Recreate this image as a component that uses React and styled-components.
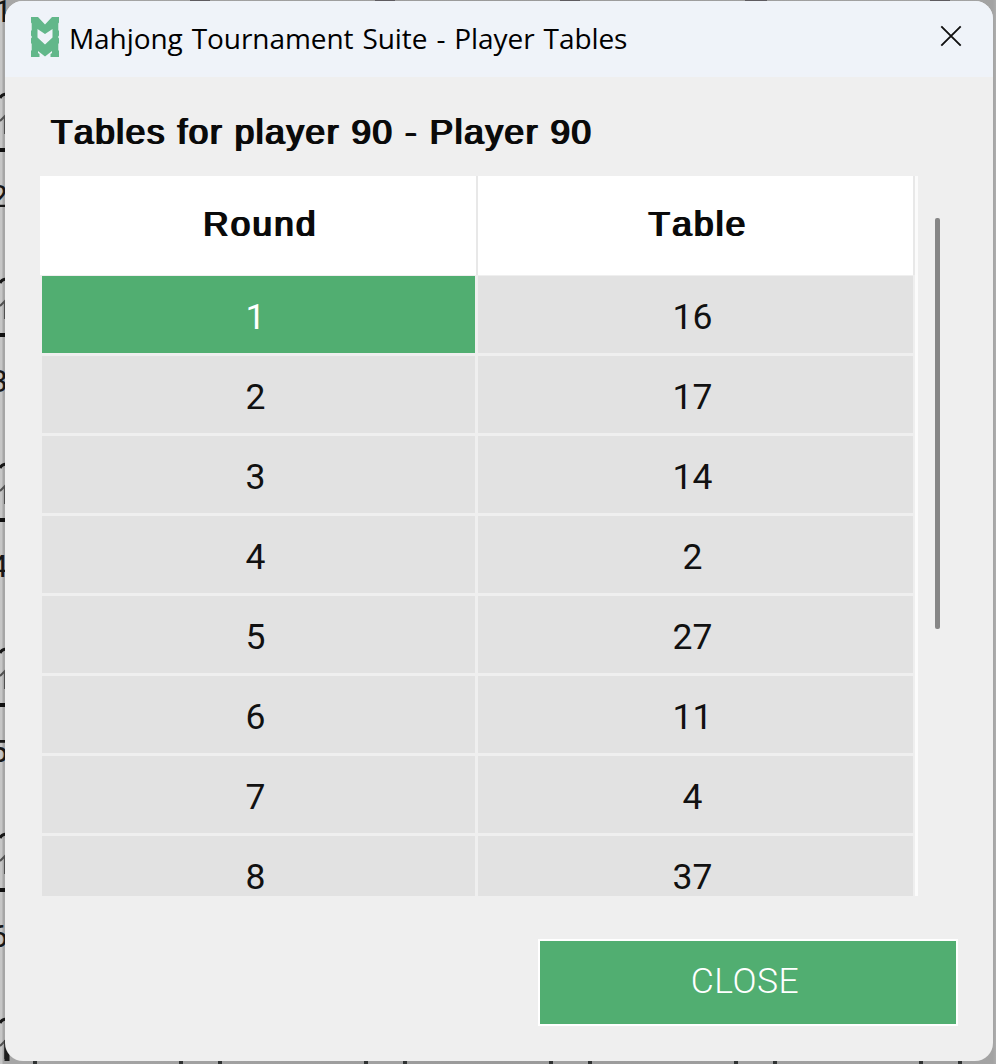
import React from "react";
import styled, { createGlobalStyle, css } from "styled-components";

const Global = createGlobalStyle`
  * { box-sizing: border-box; }
  html, body, #root { height: 100%; margin: 0; }
  body { overflow: hidden; background: #c4c4c4; font-family: "Liberation Sans", Arial, sans-serif; }
`;

const Desktop = styled.div`
  position: relative;
  width: 996px;
  height: 1064px;
  padding: 1px 3px 3px 5px;
  overflow: hidden;
  background: linear-gradient(90deg, #c6c6c6 0 2px, #a6a6a6 3px 5px, #a6a6a6 20px, #9a9a9a 50%, #a3a3a3 993px, #adadad 996px);
`;

const Backdrop = styled.svg`
  position: absolute;
  inset: 0;
`;

const Window = styled.main`
  position: relative;
  display: flex;
  flex-direction: column;
  width: 988px;
  height: 1060px;
  border-radius: 18px;
  overflow: hidden;
  background: #efefef;
`;

const TitleBar = styled.header`
  display: flex;
  align-items: center;
  flex: none;
  height: 76px;
  padding: 0 31px 0 25px;
  background: #eff3f9;
`;

const Logo = styled.svg`
  flex: none;
  width: 30px;
  height: 40px;
  margin-bottom: 4px;
`;

const Title = styled.h1`
  flex: 1;
  margin: 0 0 2px 9px;
  color: #000;
  font: 400 28px/40px "Open Sans", "Noto Sans", sans-serif;
  letter-spacing: -0.07px;
  word-spacing: 1.8px;
  white-space: nowrap;
`;

const CloseIcon = styled.svg`
  flex: none;
  width: 22px;
  height: 22px;
  margin-bottom: 6px;
`;

const Content = styled.section`
  display: flex;
  flex-direction: column;
  padding: 34px 36px 0 35px;
`;

const emboldened = css`
  font-weight: 400;
  font-kerning: none;
  text-shadow: 1px 0 currentColor, 2px 0 currentColor;
`;

const Heading = styled.h2`
  margin: 0 0 0 10px;
  height: 65px;
  font-size: 35px;
  line-height: 42px;
  letter-spacing: 1.67px;
  color: #0a0a0a;
  white-space: nowrap;
  ${emboldened}
`;

const TableArea = styled.div`
  display: flex;
  height: 720px;
`;

const Grid = styled.div`
  flex: none;
  width: 878px;
  height: 720px;
  overflow: hidden;
  border-right: 3px solid #fbfbfb;
`;

const HeaderRow = styled.div`
  display: grid;
  grid-template-columns: 436px 435px;
  gap: 2px;
  width: 875px;
  height: 99px;
  background: #e8e8e8;
`;

const HeaderCell = styled.div`
  display: flex;
  align-items: center;
  justify-content: center;
  padding: 0 0 3px 3px;
  background: #fff;
  color: #0a0a0a;
  font-size: 35px;
  letter-spacing: 2.3px;
  ${emboldened}
`;

const Row = styled.div`
  display: grid;
  grid-template-columns: 433px 435px;
  gap: 3px;
  height: 77px;
  margin: ${(p) => (p.$first ? "1px" : "3px")} 0 0 2px;
`;

const Cell = styled.div`
  display: flex;
  align-items: center;
  justify-content: center;
  padding: 5px 6px 0 0;
  font-family: Roboto, "Liberation Sans", sans-serif;
  font-size: 35.5px;
  color: ${(p) => (p.$selected ? "#fff" : "#111")};
  background: ${(p) => (p.$selected ? "#51ae71" : "#e2e2e2")};
`;

const ScrollThumb = styled.div`
  width: 5px;
  height: 411px;
  margin: 42px 0 0 17px;
  border-radius: 2px;
  background: #868686;
`;

const CloseButton = styled.button`
  align-self: flex-end;
  width: 420px;
  height: 87px;
  margin: 43px -1px 0 0;
  padding: 0 6px 3px 0;
  border: 2px solid #fff;
  background: #51ae71;
  color: #fff;
  font: 300 35.5px Roboto, "Liberation Sans", sans-serif;
  letter-spacing: 0.5px;
`;

const rows = [[1, 16], [2, 17], [3, 14], [4, 2], [5, 27], [6, 11], [7, 4], [8, 37]];

function SheetBehind() {
  return (
    <Backdrop width="996" height="1064" viewBox="0 0 996 1064">
      {[0, 1, 2, 3, 4, 5].map((i) => (
        <g key={i} transform={`translate(0 ${i * 185})`}>
          <text x={i === 0 ? -6 : -10} y="22" fontSize="32" fontFamily="Roboto" fill="#161616">{i + 1}</text>
          <path d="M0 98 Q2 94 7 94" stroke="#161616" strokeWidth="3" fill="none" />
          <path d="M0 121 L5 116 V134" stroke="#505050" strokeWidth="2" fill="none" />
          {i < 5 && <rect y="148" width="6" height="4" fill="#101010" />}
        </g>
      ))}
      <path d="M7 1040 V1061" stroke="#1d1d1d" strokeWidth="5" />
      <path d="M181 1061h39M366 1061h39M551 1061h39M736 1061h39M921 1061h39" stroke="#a1a1a1" strokeWidth="6" />
      <path d="M35 1058v6M181 1058v6M220 1058v6M366 1058v6M405 1058v6M551 1058v6M590 1058v6M736 1058v6M775 1058v6M921 1058v6M960 1058v6" stroke="#303333" strokeWidth="4" />
      <path d="M190 0h20M375 0h20M560 0h20M745 0h22M930 0h20" stroke="#5e5b60" strokeWidth="2" />
    </Backdrop>
  );
}

function TileLogo() {
  return (
    <Logo viewBox="0 0 30 40">
      <path
        fill="#62b78a"
        fillRule="evenodd"
        d="M1 0H8L15 7.5L22 0H29V5.5L28.3 6.5V13L29 14V18.5L28 20L29 21.5V26L28.3 27V33L29 34V40H20.5V37L22 36V34L15 39.5L8 34V36L9.5 37V40H1V34L1.7 33V27L1 26V21.5L2 20L1 18.5V14L1.7 13V6.5L1 5.5Z
           M7.5 12V20.5L15 27.5L22.5 20.5V12L15 17Z"
      />
    </Logo>
  );
}

export default function App() {
  return (
    <Desktop>
      <Global />
      <SheetBehind />
      <Window>
        <TitleBar>
          <TileLogo />
          <Title>Mahjong Tournament Suite - Player Tables</Title>
          <CloseIcon viewBox="0 0 22 22">
            <path d="M1.3 1.3L20.7 20.7M20.7 1.3L1.3 20.7" stroke="#111" strokeWidth="1.9" />
          </CloseIcon>
        </TitleBar>
        <Content>
          <Heading>Tables for player 90 - Player 90</Heading>
          <TableArea>
            <Grid>
              <HeaderRow>
                <HeaderCell>Round</HeaderCell>
                <HeaderCell>Table</HeaderCell>
              </HeaderRow>
              {rows.map(([round, table], i) => (
                <Row key={round} $first={i === 0}>
                  <Cell $selected={i === 0}>{round}</Cell>
                  <Cell>{table}</Cell>
                </Row>
              ))}
            </Grid>
            <ScrollThumb />
          </TableArea>
          <CloseButton>CLOSE</CloseButton>
        </Content>
      </Window>
    </Desktop>
  );
}
